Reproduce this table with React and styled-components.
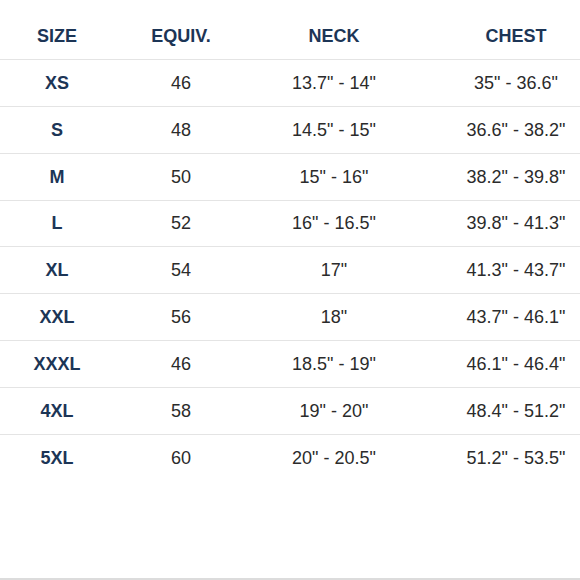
import React from 'react';
import styled, { createGlobalStyle } from 'styled-components';

const GlobalStyle = createGlobalStyle`
  html, body {
    margin: 0;
    padding: 0;
    background: #ffffff;
    overflow: hidden;
  }
  body {
    font-family: "Liberation Sans", Arial, sans-serif;
  }
`;

const COLS = '114px 134px 172px 160px';

const Page = styled.div`
  width: 580px;
  height: 580px;
  box-sizing: border-box;
  border-bottom: 2px solid #dcdcdc;
  display: flex;
  flex-direction: column;
`;

const HeadRow = styled.div`
  display: grid;
  grid-template-columns: ${COLS};
  height: 60px;
  flex-shrink: 0;
  box-sizing: border-box;
  padding-top: 26px;
  border-bottom: 1px solid #e4e4e4;
`;

const HeadCell = styled.div`
  text-align: center;
  font-size: 18px;
  line-height: 20px;
  font-weight: bold;
  color: #1c3556;
  padding-left: ${p => (p.$shift ? '32px' : '0')};
`;

const Row = styled.div`
  display: grid;
  grid-template-columns: ${COLS};
  align-items: center;
  height: 46.85px;
  flex-shrink: 0;
  box-sizing: border-box;
  border-bottom: ${p => (p.$last ? 'none' : '1px solid #e4e4e4')};
`;

const Cell = styled.div`
  text-align: center;
  font-size: 18px;
  line-height: 20px;
  font-weight: ${p => (p.$bold ? 'bold' : 'normal')};
  color: ${p => (p.$bold ? '#1c3556' : '#2b2b2b')};
  padding-left: ${p => (p.$shift ? '32px' : '0')};
`;

const rows = [
  ['XS', '46', '13.7" - 14"', '35" - 36.6"'],
  ['S', '48', '14.5" - 15"', '36.6" - 38.2"'],
  ['M', '50', '15" - 16"', '38.2" - 39.8"'],
  ['L', '52', '16" - 16.5"', '39.8" - 41.3"'],
  ['XL', '54', '17"', '41.3" - 43.7"'],
  ['XXL', '56', '18"', '43.7" - 46.1"'],
  ['XXXL', '46', '18.5" - 19"', '46.1" - 46.4"'],
  ['4XL', '58', '19" - 20"', '48.4" - 51.2"'],
  ['5XL', '60', '20" - 20.5"', '51.2" - 53.5"'],
];

const App = () => {
  return (
    <>
      <GlobalStyle />
      <Page>
        <HeadRow>
          <HeadCell>SIZE</HeadCell>
          <HeadCell>EQUIV.</HeadCell>
          <HeadCell>NECK</HeadCell>
          <HeadCell $shift>CHEST</HeadCell>
        </HeadRow>
        {rows.map((r, i) => (
          <Row key={r[0]} $last={i === rows.length - 1}>
            <Cell $bold>{r[0]}</Cell>
            <Cell>{r[1]}</Cell>
            <Cell>{r[2]}</Cell>
            <Cell $shift>{r[3]}</Cell>
          </Row>
        ))}
      </Page>
    </>
  );
};

export default App;
